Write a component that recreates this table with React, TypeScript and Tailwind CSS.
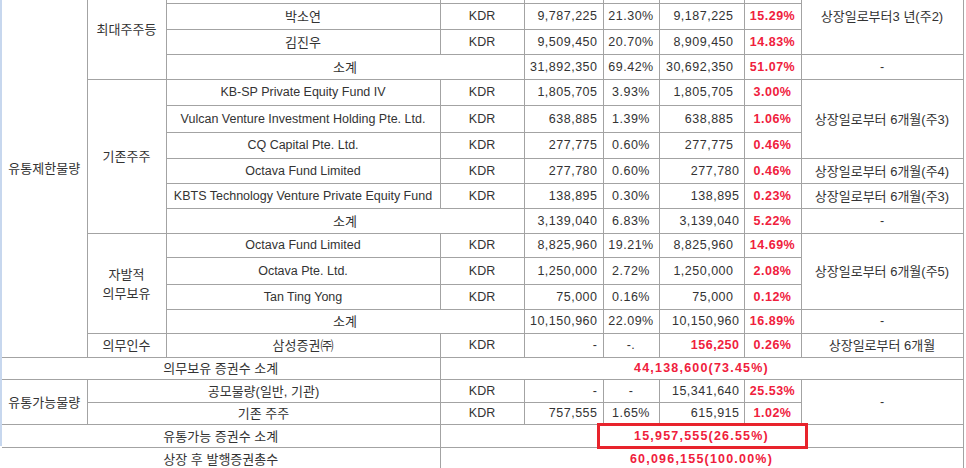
import React from 'react';

const base = 'border border-[#a3a3a3] p-0 align-middle whitespace-nowrap';
const c = `${base} text-center`;
const ko = `${base} text-center text-[13px]`;
const first = `${base} text-center text-[13px] border-l-0`;
const q = `${base} text-right pr-[5px] tracking-[0.5px]`;
const pct = `${base} text-center tracking-[0.5px]`;
const n7 = `${base} text-right pr-[10px] tracking-[0.5px]`;
const n7b = `${base} text-right pr-[4px] tracking-[0.5px]`;
const red = `${base} text-center tracking-[0.5px] text-[#f0203c] font-bold`;
const total = `${base} text-center tracking-[1.2px] text-[#f0203c] font-bold`;

type Holder = {
  name: string;
  qty: string;
  ratio: string;
  after: string;
  afterRatio: string;
  wide?: boolean;
};

const HolderCells: React.FC<{ h: Holder }> = ({ h }) => (
  <>
    <td className={/[가-힣]/.test(h.name) ? ko : c}>{h.name}</td>
    <td className={c}>KDR</td>
    <td className={q}>{h.qty}</td>
    <td className={pct}>{h.ratio}</td>
    <td className={h.wide ? n7 : n7b}>{h.after}</td>
    <td className={red}>{h.afterRatio}</td>
  </>
);

const SubTotal: React.FC<{ qty: string; ratio: string; after: string; afterRatio: string; wide?: boolean }> = ({
  qty,
  ratio,
  after,
  afterRatio,
  wide,
}) => (
  <>
    <td colSpan={2} className={ko}>소계</td>
    <td className={q}>{qty}</td>
    <td className={pct}>{ratio}</td>
    <td className={wide ? n7 : n7b}>{after}</td>
    <td className={red}>{afterRatio}</td>
    <td className={c}>-</td>
  </>
);

export default function App() {
  return (
    <div className="w-[966px] h-[468px] overflow-hidden bg-white">
      <div className="border-l-2 border-[#c7d7ee] h-full">
        <table className="-mt-[22px] table-fixed border-collapse w-[961px] text-[12.5px] leading-none text-[#333] font-['Liberation_Sans','Noto_Sans_CJK_KR',sans-serif]">
          <colgroup>
            <col className="w-[85px]" />
            <col className="w-[79px]" />
            <col className="w-[274px]" />
            <col className="w-[84px]" />
            <col className="w-[79px]" />
            <col className="w-[56px]" />
            <col className="w-[85px]" />
            <col className="w-[57px]" />
            <col className="w-[162px]" />
          </colgroup>
          <tbody>
            <tr className="h-[25px]">
              <td rowSpan={15} className={first}>유통제한물량</td>
              <td rowSpan={4} className={ko}>최대주주등</td>
              <td className={c}></td>
              <td className={c}></td>
              <td className={q}></td>
              <td className={pct}></td>
              <td className={n7}></td>
              <td className={red}></td>
              <td rowSpan={3} className={ko}>상장일로부터3 년(주2)</td>
            </tr>
            <tr className="h-[26px]">
              <HolderCells h={{ name: '박소연', qty: '9,787,225', ratio: '21.30%', after: '9,187,225', afterRatio: '15.29%', wide: true }} />
            </tr>
            <tr className="h-[25px]">
              <HolderCells h={{ name: '김진우', qty: '9,509,450', ratio: '20.70%', after: '8,909,450', afterRatio: '14.83%', wide: true }} />
            </tr>
            <tr className="h-[25px]">
              <SubTotal qty="31,892,350" ratio="69.42%" after="30,692,350" afterRatio="51.07%" wide />
            </tr>
            <tr className="h-[26px]">
              <td rowSpan={6} className={ko}>기존주주</td>
              <HolderCells h={{ name: 'KB-SP Private Equity Fund IV', qty: '1,805,705', ratio: '3.93%', after: '1,805,705', afterRatio: '3.00%', wide: true }} />
              <td rowSpan={3} className={ko}>상장일로부터 6개월(주3)</td>
            </tr>
            <tr className="h-[27px]">
              <HolderCells h={{ name: 'Vulcan Venture Investment Holding Pte. Ltd.', qty: '638,885', ratio: '1.39%', after: '638,885', afterRatio: '1.06%', wide: true }} />
            </tr>
            <tr className="h-[26px]">
              <HolderCells h={{ name: 'CQ Capital Pte. Ltd.', qty: '277,775', ratio: '0.60%', after: '277,775', afterRatio: '0.46%', wide: true }} />
            </tr>
            <tr className="h-[25px]">
              <HolderCells h={{ name: 'Octava Fund Limited', qty: '277,780', ratio: '0.60%', after: '277,780', afterRatio: '0.46%' }} />
              <td className={ko}>상장일로부터 6개월(주4)</td>
            </tr>
            <tr className="h-[25px]">
              <HolderCells h={{ name: 'KBTS Technology Venture Private Equity Fund', qty: '138,895', ratio: '0.30%', after: '138,895', afterRatio: '0.23%' }} />
              <td className={ko}>상장일로부터 6개월(주3)</td>
            </tr>
            <tr className="h-[25px]">
              <SubTotal qty="3,139,040" ratio="6.83%" after="3,139,040" afterRatio="5.22%" />
            </tr>
            <tr className="h-[24px]">
              <td rowSpan={4} className={`${ko} leading-[19px]`}>
                자발적
                <br />
                의무보유
              </td>
              <HolderCells h={{ name: 'Octava Fund Limited', qty: '8,825,960', ratio: '19.21%', after: '8,825,960', afterRatio: '14.69%', wide: true }} />
              <td rowSpan={3} className={ko}>상장일로부터 6개월(주5)</td>
            </tr>
            <tr className="h-[27px]">
              <HolderCells h={{ name: 'Octava Pte. Ltd.', qty: '1,250,000', ratio: '2.72%', after: '1,250,000', afterRatio: '2.08%', wide: true }} />
            </tr>
            <tr className="h-[25px]">
              <HolderCells h={{ name: 'Tan Ting Yong', qty: '75,000', ratio: '0.16%', after: '75,000', afterRatio: '0.12%', wide: true }} />
            </tr>
            <tr className="h-[24px]">
              <SubTotal qty="10,150,960" ratio="22.09%" after="10,150,960" afterRatio="16.89%" />
            </tr>
            <tr className="h-[24px]">
              <td className={ko}>의무인수</td>
              <td className={ko}>삼성증권㈜</td>
              <td className={c}>KDR</td>
              <td className={q}>-</td>
              <td className={pct}>-.</td>
              <td className={`${n7b} text-[#f0203c] font-bold`}>156,250</td>
              <td className={red}>0.26%</td>
              <td className={ko}>상장일로부터 6개월</td>
            </tr>
            <tr className="h-[22px]">
              <td colSpan={3} className={first}>의무보유 증권수 소계</td>
              <td colSpan={6} className={total}>44,138,600(73.45%)</td>
            </tr>
            <tr className="h-[23px]">
              <td rowSpan={2} className={first}>유통가능물량</td>
              <td colSpan={2} className={ko}>공모물량(일반, 기관)</td>
              <td className={c}>KDR</td>
              <td className={q}>-</td>
              <td className={pct}>-</td>
              <td className={n7b}>15,341,640</td>
              <td className={red}>25.53%</td>
              <td rowSpan={2} className={c}>-</td>
            </tr>
            <tr className="h-[22px]">
              <td colSpan={2} className={ko}>기존 주주</td>
              <td className={c}>KDR</td>
              <td className={q}>757,555</td>
              <td className={pct}>1.65%</td>
              <td className={n7b}>615,915</td>
              <td className={red}>1.02%</td>
            </tr>
            <tr className="h-[23px]">
              <td colSpan={3} className={first}>유통가능 증권수 소계</td>
              <td colSpan={6} className={`${total} relative`}>
                15,957,555(26.55%)
                <div className="absolute left-[156px] -top-[2px] w-[211px] h-[26px] border-[3px] border-[#e8232c]" />
              </td>
            </tr>
            <tr className="h-[24px]">
              <td colSpan={3} className={first}>상장 후 발행증권총수</td>
              <td colSpan={6} className={total}>60,096,155(100.00%)</td>
            </tr>
          </tbody>
        </table>
      </div>
    </div>
  );
}
